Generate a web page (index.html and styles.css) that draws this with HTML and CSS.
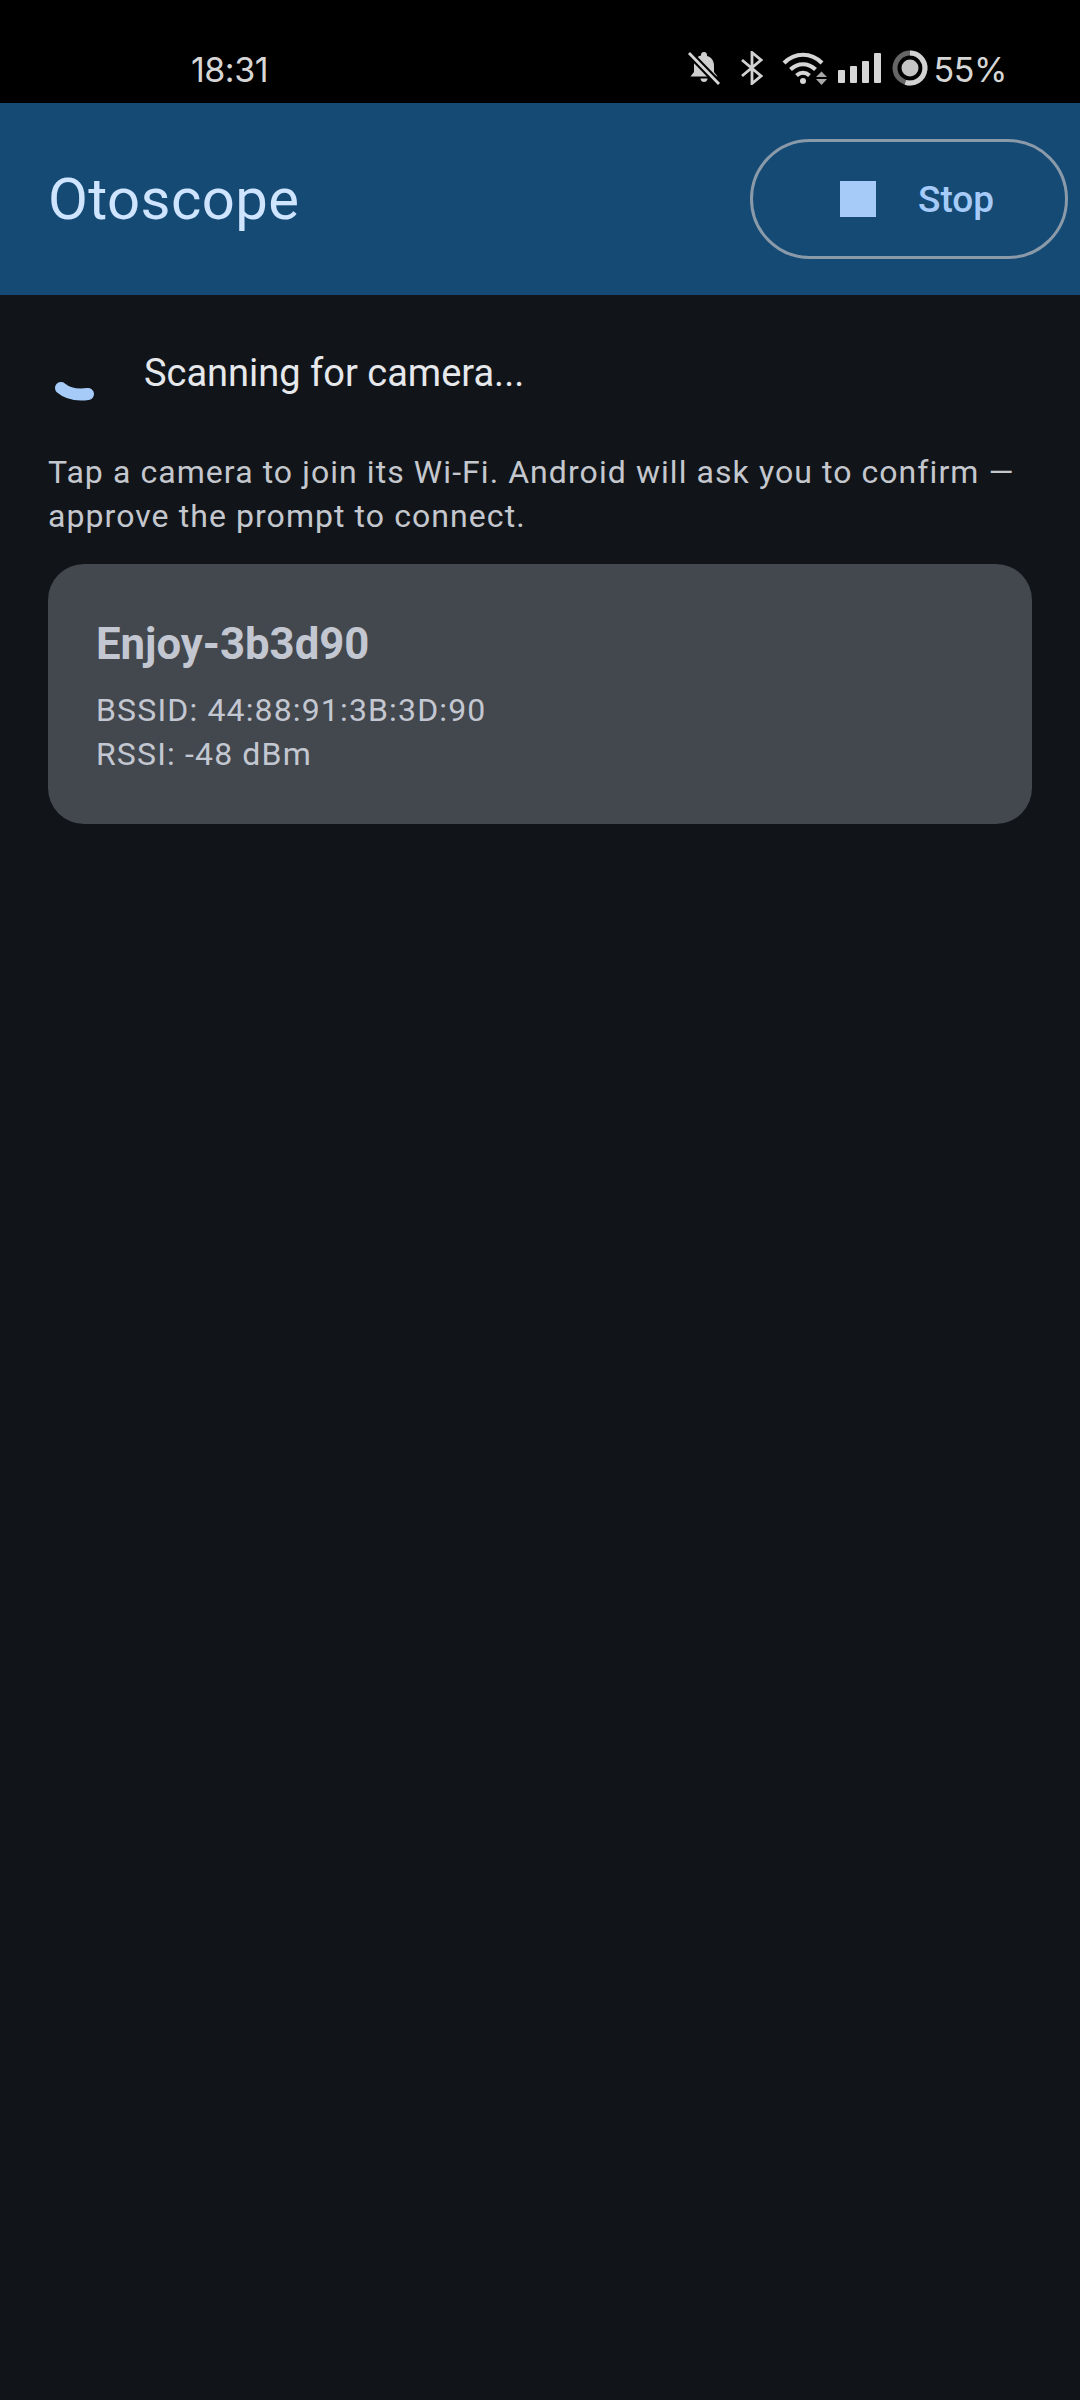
FILE: index.html
```html
<!DOCTYPE html>
<html lang="en">
<head>
    <meta charset="UTF-8">
    <meta name="viewport" content="width=device-width, initial-scale=1.0">
    <title>Otoscope</title>
    <link rel="stylesheet" href="styles.css">
</head>
<body>

    <div class="status-bar">
        <span class="clock">18:31</span>
        <div class="status-icons">
            <svg class="icon-bell" width="34" height="34" viewBox="0 0 34 34">
                <path d="M17 1c1.800 0 3 1.200 3 3v1c4.500 1.200 7 5 7 9.500V21l3.500 4.500h-27L7 21v-7c0-4.500 2.500-8.300 7-9.500V4c0-1.800 1.200-3 3-3zM13.500 27.500h7c0 2-1.500 3.500-3.500 3.500s-3.500-1.500-3.500-3.500z" fill="#cfcfcf"/>
                <path d="M1 1l31 32" stroke="#000" stroke-width="7"/>
                <path d="M2 2l30 31" stroke="#d6d6d6" stroke-width="2.800"/>
            </svg>
            <svg class="icon-bt" width="22" height="34" viewBox="0 0 22 34">
                <path d="M1 9l19 16-9 7.500V1.500L20 9 1 25" fill="none" stroke="#d2d2d2" stroke-width="2.800"/>
            </svg>
            <svg class="icon-wifi" width="46" height="34" viewBox="0 0 46 34">
                <path d="M2 12C13 1 29 1 40 12M8.500 18.500c7.500-7 17.500-7 25 0M14.500 24.500c4-3.500 9-3.500 13 0" fill="none" stroke="#d6d6d6" stroke-width="4.200"/>
                <circle cx="21" cy="30" r="3" fill="#d6d6d6"/>
                <path d="M34 26l5.500-5.500L45 26zM34 28h11l-5.500 6z" fill="#a8a8a8"/>
            </svg>
            <svg class="icon-signal" width="44" height="32" viewBox="0 0 44 32">
                <rect x="0" y="18" width="7" height="13" rx="1" fill="#d6d6d6"/>
                <rect x="12" y="14" width="7" height="17" rx="1" fill="#d6d6d6"/>
                <rect x="24" y="9" width="7" height="22" rx="1" fill="#d6d6d6"/>
                <rect x="36" y="1" width="7" height="30" rx="1" fill="#d6d6d6"/>
            </svg>
            <svg class="icon-battery" width="36" height="36" viewBox="0 0 36 36">
                <circle cx="18" cy="18" r="15" fill="none" stroke="#666" stroke-width="5"/>
                <path d="M18 3a15 15 0 1 1-4.600 29.300" fill="none" stroke="#d2d2d2" stroke-width="5"/>
                <circle cx="18" cy="18" r="8.500" fill="#c4c4c4"/>
            </svg>
            <span class="battery-text">55%</span>
        </div>
    </div>

    <header class="app-bar">
        <h1>Otoscope</h1>
        <button class="stop-btn" type="button">
            <span class="stop-square"></span>
            <span>Stop</span>
        </button>
    </header>

    <main class="content">
        <div class="scan-row">
            <svg class="spinner" width="44" height="24" viewBox="0 0 44 24">
                <path d="M7 7c7 6 16 7.500 27 6" fill="none" stroke="#a6cbf8" stroke-width="12" stroke-linecap="round"/>
            </svg>
            <span class="scan-text">Scanning for camera...</span>
        </div>

        <p class="hint">Tap a camera to join its Wi-Fi. Android will ask you to confirm — approve the prompt to connect.</p>

        <div class="camera-card">
            <h2>Enjoy-3b3d90</h2>
            <p>BSSID: 44:88:91:3B:3D:90</p>
            <p>RSSI: -48 dBm</p>
        </div>
    </main>

</body>
</html>
```

FILE: styles.css
```css
* {
    box-sizing: border-box;
}

html, body {
    height: 100%;
}

body {
    margin: 0;
    background-color: #11151a;
    font-family: Roboto, "Noto Sans", sans-serif;
}

.status-bar {
    height: 103px;
    background-color: #000;
    color: #d6d6d6;
    display: flex;
    align-items: center;
    justify-content: space-between;
    padding: 33px 73px 0 191px;
}

.clock {
    margin-top: 2px;
    font-family: Inter, Roboto, sans-serif;
    font-size: 34px;
    letter-spacing: -0.5px;
}

.status-icons {
    display: flex;
    align-items: center;
}

.icon-bt {
    margin-left: 20px;
}

.icon-wifi {
    margin-left: 19px;
}

.icon-signal {
    margin-left: 10px;
}

.icon-battery {
    margin-left: 10px;
}

.battery-text {
    margin: 2px 0 0 5px;
    font-family: Inter, Roboto, sans-serif;
    font-size: 34px;
    letter-spacing: -0.4px;
}

.app-bar {
    height: 192px;
    background-color: #154a75;
    display: flex;
    align-items: center;
    justify-content: space-between;
    padding: 0 12px 0 48px;
}

.app-bar h1 {
    margin: 0;
    color: #cfe5ff;
    font-size: 58px;
    font-weight: 400;
    letter-spacing: 0.4px;
}

.stop-btn {
    width: 318px;
    height: 120px;
    display: flex;
    align-items: center;
    gap: 42px;
    padding: 0 0 0 87px;
    background: transparent;
    border: 3px solid #8a9aa9;
    border-radius: 60px;
    color: #a6cbf8;
    font-family: inherit;
    font-size: 37px;
    font-weight: 500;
}

.stop-square {
    width: 36px;
    height: 36px;
    background-color: #a6cbf8;
}

.content {
    padding: 52px 48px 0;
}

.scan-row {
    display: flex;
    align-items: flex-start;
    gap: 46px;
    height: 64px;
    padding-left: 6px;
}

.spinner {
    margin-top: 34px;
}

.scan-text {
    color: #e6e8ec;
    font-size: 38px;
    line-height: 50px;
    margin-top: 1px;
}

.hint {
    margin: 39px 0 0;
    color: #c4c7cd;
    font-size: 32px;
    line-height: 44px;
    letter-spacing: 1.07px;
}

.camera-card {
    margin-top: 26px;
    height: 260px;
    padding: 55px 48px 0;
    background-color: #43474e;
    border-radius: 36px;
    color: #c3c7d1;
}

.camera-card h2 {
    margin: 0 0 19px;
    font-size: 43.7px;
    line-height: 50px;
    font-weight: 700;
}

.camera-card p {
    margin: 0;
    font-size: 32px;
    line-height: 44px;
    letter-spacing: 1.15px;
}
```
